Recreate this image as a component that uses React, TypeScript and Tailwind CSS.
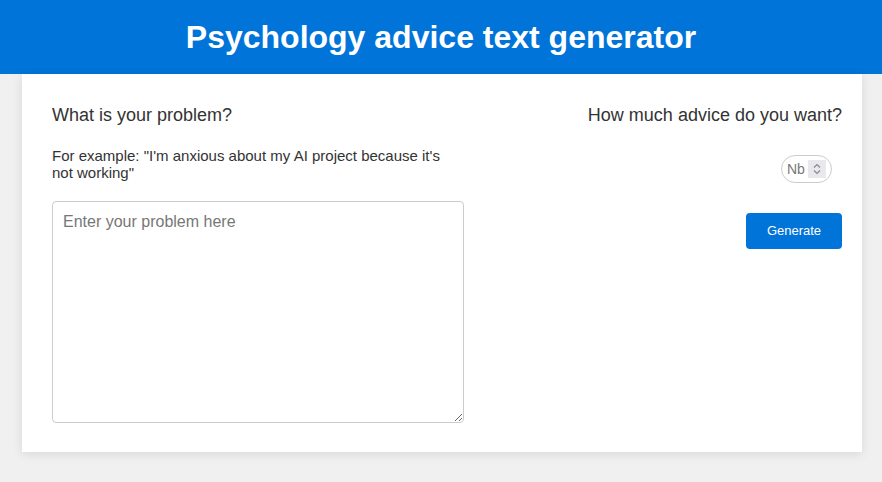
function Spinner() {
  return (
    <span className="flex h-[18px] w-[18px] flex-col items-center justify-center bg-[#e9e9ed]">
      <svg width="10" height="14" viewBox="0 0 10 14" fill="none" stroke="#8a8a8a" strokeWidth="1.2">
        <path d="M2 5.5 L5 2.5 L8 5.5" />
        <path d="M2 8.5 L5 11.5 L8 8.5" />
      </svg>
    </span>
  )
}

export default function App() {
  return (
    <div className="min-h-[482px] bg-[#f0f0f0] font-['Liberation_Sans',Arial,sans-serif]">
      {/* Header */}
      <header className="h-[74px] bg-[#0074d9] flex items-center justify-center">
        <h1 className="text-[32px] font-bold text-white leading-none">Psychology advice text generator</h1>
      </header>

      {/* Card */}
      <main className="ml-[22px] w-[840px] bg-white shadow-[0_2px_10px_rgba(0,0,0,0.1)] pl-[30px] pr-[20px] pt-[30px] pb-[29px] flex justify-between">
        <section className="w-[412px] flex flex-col">
          <h2 className="text-[18px] leading-[22px] text-[#333]">What is your problem?</h2>
          <p className="mt-[21px] text-[15px] leading-[17px] text-[#333]">
            For example: "I'm anxious about my AI project because it's not working"
          </p>
          <textarea
            className="mt-[20px] h-[222px] w-full rounded-[4px] border border-[#ccc] px-[10px] py-[8px] text-[16px] text-[#333] placeholder:text-[#777] outline-none"
            placeholder="Enter your problem here"
          />
        </section>

        <section className="flex flex-col items-end">
          <h2 className="text-[18px] leading-[22px] text-[#333]">How much advice do you want?</h2>
          <label className="mt-[29px] mr-[10px] flex h-[28px] w-[51px] items-center rounded-[14px] border border-[#ccc] pl-[5px] pr-[5px]">
            <input
              type="number"
              placeholder="Nb"
              className="w-[22px] min-w-0 text-[14px] text-[#333] placeholder:text-[#777] outline-none [appearance:textfield] [&::-webkit-inner-spin-button]:appearance-none"
            />
            <Spinner />
          </label>
          <button className="mt-[30px] h-[36px] w-[96px] rounded-[4px] bg-[#0074d9] text-[13px] text-white">
            Generate
          </button>
        </section>
      </main>
    </div>
  )
}
